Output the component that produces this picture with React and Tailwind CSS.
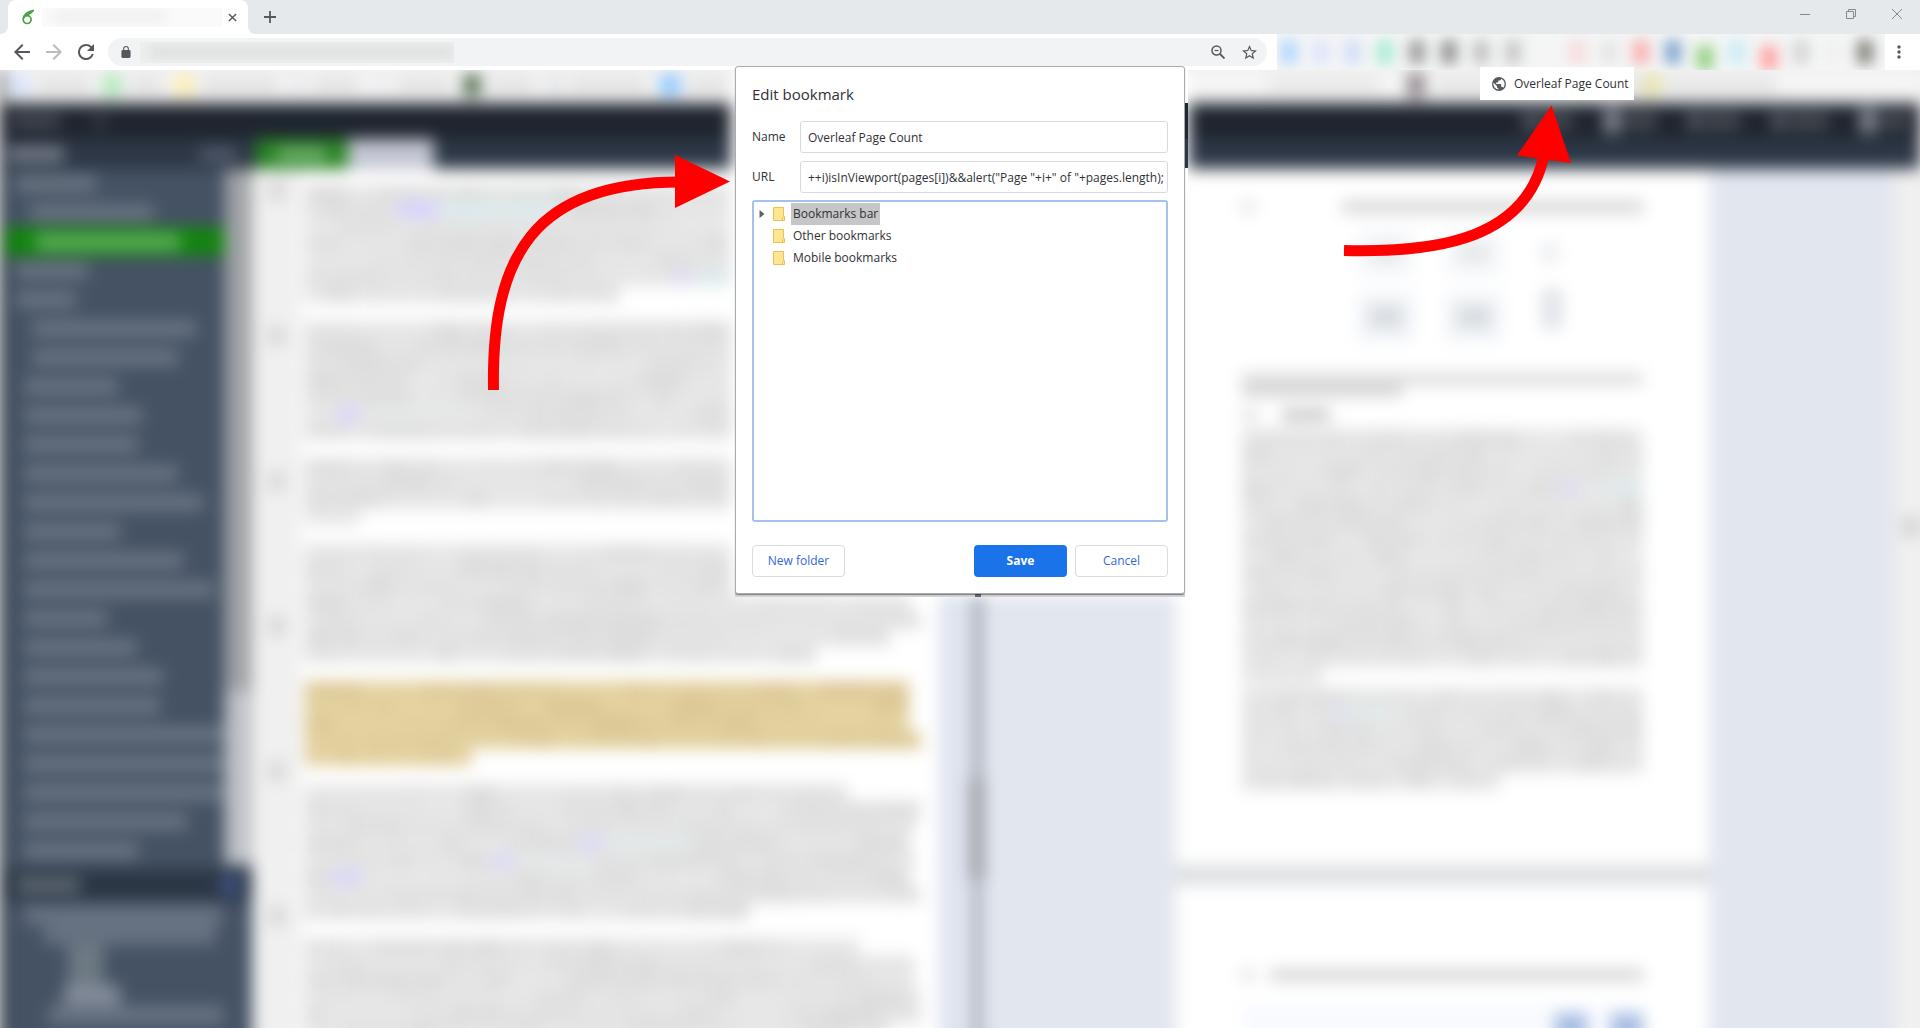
import React from "react";

const seeded = (seed) => {
  let s = seed * 7919 + 17;
  return () => {
    s = (s * 1103515245 + 12345) % 2147483648;
    return s / 2147483648;
  };
};

/* One line of redacted words; width in percent of the column. */
function Line({ width = 100, seed, link, tone = "gray" }) {
  const rnd = seeded(seed);
  const words = Array.from({ length: 16 }, () => ({ grow: 2 + Math.floor(rnd() * 9), o: rnd() }));
  const base = tone === "gold" ? "bg-[#e6d4a2]" : "bg-[#e8e8e8]";
  const word = tone === "gold" ? "bg-[#dbc796]" : "bg-[#dcdcdc]";
  return (
    <div className={`flex h-[17px] items-center gap-1 ${base}`} style={{ width: `${width}%` }}>
      {words.map((w, i) => (
        <span
          key={i}
          className={`h-[17px] ${link === i ? "bg-[#d5d2ff]" : link !== undefined && (i === link + 1 || i === link + 2) ? "bg-[#dcebed]" : word}`}
          style={{ flexGrow: w.grow, opacity: w.o }}
        />
      ))}
    </div>
  );
}

function Paragraph({ lines, tone, seed }) {
  return (
    <div>
      {lines.map((l, i) => {
        const [width, link] = Array.isArray(l) ? l : [l];
        return <Line key={i} width={width} link={link} tone={tone} seed={seed * 31 + i} />;
      })}
    </div>
  );
}

const FILES = [
  [16, 80], [30, 124], [0, 0], [16, 72], [16, 60], [32, 164], [32, 146], [24, 94], [24, 118], [24, 114], [24, 154],
  [24, 179], [24, 96], [24, 159], [24, 190], [24, 83], [24, 113], [24, 139], [24, 136], [24, 200], [24, 200],
  [24, 200], [24, 163], [24, 114],
];

function FileTree() {
  return (
    <aside className="flex flex-col bg-[#455264]">
      <div className="flex h-[30px] items-center justify-between bg-[#2d3746] pr-4 pl-2">
        <span className="h-4 w-14 bg-[#747b88]" />
        <span className="h-3 w-9 bg-[#566071]" />
      </div>
      <div className="flex">
        <div className="flex-1 overflow-hidden">
          {FILES.map(([left, width], i) =>
            width === 0 ? (
              <div key={i} className="flex h-[29px] items-center bg-[#12850f] pl-9">
                <span className="h-4 w-36 bg-[#5db058]" />
              </div>
            ) : (
              <div key={i} className="flex h-[29px] items-center" style={{ paddingLeft: left }}>
                <span className="h-[17px] bg-[#687381]" style={{ width }} />
              </div>
            )
          )}
        </div>
        <div className="flex w-[27px] flex-col bg-[#bfc3c8]">
          <span className="h-[522px] bg-[#a0a3a7]" />
        </div>
      </div>
      <div className="mt-1 flex h-8 items-center justify-between bg-[#2b3645] pr-3 pl-4">
        <span className="h-4 w-16 bg-[#5d6770]" />
        <span className="h-4 w-5 bg-[#3f5688]" />
      </div>
      <div className="flex flex-1 flex-col pt-1">
        <span className="ml-6 h-5 w-[198px] bg-[#667181]" />
        <span className="ml-11 h-5 w-[172px] bg-[#667181]" />
        <span className="ml-[68px] h-10 w-9 bg-[#6d7983]" />
        <span className="ml-16 h-5 w-14 bg-[#848b9a]" />
        <span className="ml-12 h-5 w-44 bg-[#667181]" />
      </div>
    </aside>
  );
}

const SOURCE = [
  { lines: [100, [100, 3], 100, 100, 100, [100, 9], 51] },
  { lines: [97, 100, 100, 100, 98, [100, 1], 96] },
  { lines: [100, 97, 100, 9] },
  { lines: [98, 100, 100, 98, 100, 95, 83] },
  { lines: [98, 98, 98, 100, 27], tone: "gold" },
  { lines: [88, 100, 99, [98, 8], [99, 5], [98, 1], 100, 72] },
  { lines: [90, 99, 99, 100, 100, 95] },
];

function Editor() {
  return (
    <section className="flex flex-col bg-white">
      <div className="flex h-[30px] bg-[#2d3746]">
        <span className="ml-1 flex w-[92px] items-center justify-center bg-[#2a8526]">
          <span className="h-3 w-12 bg-[#78b575]" />
        </span>
        <span className="w-[86px] bg-[#c3c6d2]" />
      </div>
      <div className="flex flex-1">
        <div className="flex w-[49px] shrink-0 flex-col items-center gap-[125px] bg-[#f0f0f0] pt-3">
          {[0, 1, 2, 3, 4, 5].map((i) => (
            <span key={i} className="h-5 w-4 bg-[#d6d6d6]" />
          ))}
        </div>
        <div className="flex flex-1 flex-col gap-[18px] pt-[15px] pr-[18px] pl-1">
          {SOURCE.map((p, i) => (
            <Paragraph key={i} lines={p.lines} tone={p.tone} seed={i + 1} />
          ))}
        </div>
        <div className="w-[30px] shrink-0 bg-[#dfe4ef]" />
        <div className="flex w-4 shrink-0 flex-col items-center bg-[#dddfe6]">
          <span className="h-[610px] w-[7px] bg-[#8c94a1]" />
          <span className="h-[100px] w-4 bg-[#a2a4a8]" />
          <span className="w-[7px] flex-1 bg-[#989eaa]" />
        </div>
      </div>
    </section>
  );
}

function FigureRow({ faint }) {
  return (
    <div className={`flex items-center pl-[116px] ${faint ? "opacity-60" : ""}`}>
      <span className="flex h-12 w-14 items-center justify-center bg-[#f1f4f8]">
        <span className="h-5 w-8 bg-[#d6d9dd]" />
      </span>
      <span className="ml-8 flex h-12 w-14 items-center justify-center bg-[#f1f4f8]">
        <span className="h-5 w-8 bg-[#d6d9dd]" />
      </span>
      <span className={faint ? "ml-10 h-5 w-4 bg-[#dfe2e8]" : "mb-4 ml-10 h-10 w-5 bg-[#dfe2e8]"} />
    </div>
  );
}

const BODY = [100, 100, 100, [100, 13], 100, 100, 100, 100, 100, 100, 100, 100, 100, 100, 20];

function Preview() {
  return (
    <section className="flex flex-1 bg-[#e2e6ef]">
      <div className="flex flex-1 flex-col pr-[186px] pl-[191px]">
        <div className="h-[696px] shrink-0 bg-white px-[66px] pt-8">
          <div className="flex h-3 gap-16">
            <span className="w-3 bg-[#dedede]" />
            <span className="ml-6 flex-1 bg-[#d4d4d4]" />
          </div>
          <div className="mt-4 flex flex-col gap-3">
            <FigureRow faint />
            <FigureRow />
          </div>
          <div className="mt-7 flex flex-col">
            <span className="h-3 bg-[#dcdcdc]" />
            <span className="h-3 w-40 bg-[#d6d6d6]" />
          </div>
          <div className="mt-3 flex gap-6">
            <span className="h-3 w-4 bg-[#e0e0e0]" />
            <span className="h-3 w-12 bg-[#c6c6c6]" />
          </div>
          <div className="mt-2">
            <Paragraph lines={BODY} seed={20} />
            <div className="mt-1">
              <Paragraph lines={[100, [100, 4], 100, 100, 100, 64]} seed={40} />
            </div>
          </div>
        </div>
        <div className="h-5 shrink-0 bg-[#dcdfe1]" />
        <div className="flex flex-1 flex-col bg-white px-[66px] pt-[84px]">
          <div className="flex h-3 gap-4">
            <span className="w-3 bg-[#dedede]" />
            <span className="flex-1 bg-[#d4d4d4]" />
          </div>
          <div className="mt-6 flex flex-1 items-start justify-end gap-6 bg-[#f8faff] pt-2">
            <span className="h-8 w-8 bg-[#a9bde2]" />
            <span className="h-8 w-8 bg-[#a9bde2]" />
          </div>
        </div>
      </div>
      <div className="flex w-[25px] items-center bg-[#f0f0f0]">
        <span className="mb-40 ml-2 h-5 flex-1 bg-[#d0d0d0]" />
      </div>
    </section>
  );
}

const SHORTCUTS = [
  ["w-4 bg-[#cfe0ff]", "w-14"], ["w-4 bg-[#9ee7aa]", "w-9"], ["w-4 bg-[#ffec9e]", "w-20"], ["w-3 bg-[#e4e5e8]", "w-12"],
  ["w-4 bg-[#ececef]", "w-14"], ["w-4 bg-[#3b5c38]", "w-12"], ["w-3 bg-[#dcdee1]", "w-20"], ["w-5 bg-[#86c4ff]", "w-12"],
  ["w-4 bg-[#8dcff2]", "w-20"],
];

function BookmarksBar() {
  return (
    <div className="flex h-[33px] items-center bg-[#f5f5f5] pb-1 pl-3">
      {SHORTCUTS.map(([icon, label], i) => (
        <span key={i} className="flex items-center">
          <span className={`h-5 ${icon}`} />
          <span className={`mr-3 ml-2 h-4 bg-[#e2e2e2] ${label}`} />
        </span>
      ))}
      <span className="flex-1" />
      <span className="h-4 w-28 bg-[#e8e8e8]" />
      <span className="ml-7 h-6 w-4 bg-[#857a7f]" />
      <span className="ml-3 h-4 w-52 bg-[#e4e4e4]" />
      <span className="mr-1 h-5 w-4 bg-[#e8e09a]" />
      <span className="mr-36 h-4 w-28 bg-[#e4e4e4]" />
    </div>
  );
}

function Workspace() {
  return (
    <div className="flex min-h-0 flex-1 flex-col overflow-hidden bg-[#f0f0f0]">
      <div className="relative flex flex-1 flex-col blur-[8px]">
        <BookmarksBar />
        <div className="flex h-[36px] shrink-0 items-center justify-between bg-[#1f252f] pr-3 pl-3">
          <div className="flex gap-9">
            <span className="h-3 w-12 bg-[#4b4f57]" />
            <span className="h-3 w-2 bg-[#4b4f57]" />
          </div>
          <div className="flex gap-8">
            {["w-8", "w-8", "w-9", "w-10", "w-7"].map((w, i) => (
              <span key={i} className="flex items-center gap-1">
                <span className={i === 1 || i === 4 ? "h-6 w-4 bg-[#8c8f99]" : "h-4 w-3 bg-[#62656e]"} />
                <span className={`h-4 bg-[#484c53] ${w}`} />
              </span>
            ))}
          </div>
        </div>
        <div className="grid flex-1 grid-cols-[252px_733fr_935fr]">
          <FileTree />
          <Editor />
          <div className="flex flex-col bg-[#e2e6ef]">
            <div className="h-[30px] shrink-0 bg-[#2d3746]" />
            <Preview />
          </div>
        </div>
        <div className="absolute inset-y-0 left-0 w-1 bg-[#14191f]" />
        <div className="absolute top-0 left-1/2 h-[526px] w-[458px] -translate-x-1/2 bg-white" />
      </div>
    </div>
  );
}

function OverleafMark() {
  return (
    <svg viewBox="0 0 14 18" className="h-4 w-3" fill="none" stroke="#47a141" strokeWidth="2">
      <circle cx="6" cy="12" r="4.6" />
      <path d="M1.6 11C2 6 6 3 13 1.5C11 5 8 5.5 4.5 7.5" />
    </svg>
  );
}

function WindowTop() {
  return (
    <div className="flex h-[34px] bg-[#e5e9ec] pl-2">
      <div className="relative flex w-60 items-center rounded-t-lg bg-white pr-2 pl-[14px] before:absolute before:bottom-0 before:-left-2 before:h-2 before:w-2 before:bg-[radial-gradient(circle_at_0_0,#e5e9ec_8px,white_8px)] after:absolute after:-right-2 after:bottom-0 after:h-2 after:w-2 after:bg-[radial-gradient(circle_at_100%_0,#e5e9ec_8px,white_8px)]">
        <OverleafMark />
        <div className="ml-2 flex h-[19px] flex-1 items-center overflow-hidden bg-[#fafafa]">
          <span className="ml-3 h-3 w-28 bg-[#efefef] blur-[6px]" />
        </div>
        <button aria-label="Close tab" className="ml-[2px] flex h-4 w-4 items-center justify-center">
          <svg viewBox="0 0 10 10" className="h-[9px] w-[9px]" stroke="#55595e" strokeWidth="1.6">
            <path d="M1 1L9 9M9 1L1 9" />
          </svg>
        </button>
      </div>
      <button aria-label="New tab" className="ml-[14px] flex w-4 items-center justify-center">
        <svg viewBox="0 0 12 12" className="h-3 w-3" stroke="#55595e" strokeWidth="1.8">
          <path d="M6 0V12M0 6H12" />
        </svg>
      </button>
      <div className="ml-auto flex h-[28px] items-center">
        <button aria-label="Minimize" className="flex w-[46px] justify-center">
          <svg viewBox="0 0 10 10" className="h-[10px] w-[10px]" stroke="#85898d">
            <path d="M0 5.5H10" />
          </svg>
        </button>
        <button aria-label="Restore" className="flex w-[46px] justify-center">
          <svg viewBox="0 0 10 10" className="h-[10px] w-[10px]" stroke="#85898d" fill="none">
            <path d="M0.5 2.5H7.5V9.5H0.5ZM2.5 2.5V0.5H9.5V7.5H7.5" />
          </svg>
        </button>
        <button aria-label="Close window" className="flex w-[46px] justify-center">
          <svg viewBox="0 0 10 10" className="h-[10px] w-[10px]" stroke="#85898d">
            <path d="M0 0L10 10M10 0L0 10" />
          </svg>
        </button>
      </div>
    </div>
  );
}

const EXTENSIONS = [
  "bg-[#b0d6ff]", "bg-[#dbe3fb]", "bg-[#cfdcf8]", "bg-[#a6ecd4]", "bg-[#9c9c9c]", "bg-[#939393]", "bg-[#c0c0c0]",
  "bg-[#c6c6c6]", "bg-[#f4f4f4]", "bg-[#f7dada]", "bg-[#e4e4e4]", "bg-[#fbadad]", "bg-[#7fa5cc]", "bg-[#8ecf7e]",
  "bg-[#c8ebf5]", "bg-[#ffa0a0]", "bg-[#d4d4d4]", "bg-[#f0f0f0]", "bg-[#84847d]",
];

function Toolbar() {
  const icon = "h-4 w-4";
  return (
    <div className="flex h-9 items-center bg-white pl-[14px]">
      <div className="flex gap-4">
        <button aria-label="Back">
          <svg viewBox="4 4 16 16" className={icon} fill="#55595e">
            <path d="M20 11H7.83l5.59-5.59L12 4l-8 8 8 8 1.41-1.41L7.83 13H20z" />
          </svg>
        </button>
        <button aria-label="Forward">
          <svg viewBox="4 4 16 16" className={icon} fill="#babcbe">
            <path d="M12 4l-1.41 1.41L16.17 11H4v2h12.17l-5.58 5.59L12 20l8-8z" />
          </svg>
        </button>
        <button aria-label="Reload">
          <svg viewBox="4 4 16 16" className={icon} fill="#55595e">
            <path d="M17.65 6.35A7.96 7.96 0 0 0 12 4a8 8 0 1 0 7.73 10h-2.08A6 6 0 1 1 12 6c1.66 0 3.14.69 4.22 1.78L13 11h7V4z" />
          </svg>
        </button>
      </div>
      <div className="ml-[14px] flex h-7 flex-1 items-center rounded-full bg-[#f1f3f4] pr-[10px] pl-[13px]">
        <svg viewBox="4 1 16 21" className="h-3 w-[10px]" fill="#55595e">
          <path d="M18 8h-1V6A5 5 0 0 0 7 6v2H6a2 2 0 0 0-2 2v10c0 1.1.9 2 2 2h12a2 2 0 0 0 2-2V10a2 2 0 0 0-2-2zM8.9 6a3.1 3.1 0 0 1 6.2 0v2H8.9z" />
        </svg>
        <span className="ml-[9px] flex h-[21px] w-[314px] items-center overflow-hidden bg-[#eff0f0]">
          <span className="ml-2 h-3 flex-1 bg-[#dcdede] blur-[6px]" />
        </span>
        <button aria-label="Zoom" className="ml-auto">
          <svg viewBox="0 0 14 14" className="h-[14px] w-[14px]" fill="none" stroke="#55595e" strokeWidth="1.5">
            <circle cx="5.5" cy="5.5" r="4.5" />
            <path d="M9 9L13.5 13.5" strokeWidth="1.8" />
            <path d="M3.5 5.5H7.5" strokeWidth="1.2" />
          </svg>
        </button>
        <button aria-label="Bookmark this page" className="ml-[17px]">
          <svg viewBox="2 2 20 20" className="h-[15px] w-[15px]" fill="#55595e">
            <path d="M22 9.24l-7.19-.62L12 2 9.19 8.63 2 9.24l5.46 4.73L5.82 21 12 17.27 18.18 21l-1.63-7.03L22 9.24zM12 15.4l-3.76 2.27 1-4.28-3.32-2.88 4.38-.38L12 6.1l1.71 4.04 4.38.38-3.32 2.88 1 4.28L12 15.4z" />
          </svg>
        </button>
      </div>
      <div className="ml-[10px] h-full w-[608px] overflow-hidden bg-[#f5f6f6]">
        <div className="flex h-full items-center gap-4 px-1 blur-[7px]">
          {EXTENSIONS.map((c, i) => (
            <span key={i} className={`h-6 w-4 ${i === 13 || i === 15 ? "mt-3" : ""} ${c}`} />
          ))}
        </div>
      </div>
      <button aria-label="Menu" className="flex w-[35px] justify-center pr-2">
        <svg viewBox="0 0 4 14" className="h-[14px] w-1" fill="#55595e">
          <circle cx="2" cy="2" r="1.7" />
          <circle cx="2" cy="7" r="1.7" />
          <circle cx="2" cy="12" r="1.7" />
        </svg>
      </button>
    </div>
  );
}

function Folder() {
  return (
    <svg viewBox="0 0 12 14" className="h-[14px] w-3" fill="#ffe594" stroke="#e8c14e">
      <path d="M0.5 0.5H10.5V9.5H11.5V13.5H0.5Z" />
      <path d="M9.5 13.5V10.5L10.5 9.5" />
    </svg>
  );
}

function EditBookmark() {
  const field =
    "h-8 w-full min-w-0 rounded-[3px] border border-[#d9dade] bg-white pr-0 pl-[7px] text-[12px] text-[#303136] outline-none";
  const outline = "h-8 w-[93px] rounded border border-[#dadce0] bg-white text-[12px] text-[#3367d6]";
  return (
    <div className="absolute top-[66px] left-1/2 -translate-x-1/2">
      <div className="absolute top-1 bottom-0 left-full flex w-[3px] flex-col bg-white">
        <span className="mt-[33px] h-9 bg-[#212730]" />
        <span className="h-[29px] bg-[#2d3746]" />
      </div>
      <div className="absolute top-full left-0 flex h-[3px] w-full bg-[#d3d4d6]">
        <span className="ml-[240px] h-full w-[6px] bg-[#606b7d]" />
      </div>
      <form
        role="dialog"
        aria-label="Edit bookmark"
        onSubmit={(e) => e.preventDefault()}
        className="relative w-[450px] rounded-[3px] border border-[#a9abae] bg-white px-4 pt-[17px] pb-4 shadow-[0_1px_1px_rgba(0,0,0,0.4)]"
      >
        <h1 className="text-[15px] leading-5 text-[#303136]">Edit bookmark</h1>
        <div className="mt-[17px] grid grid-cols-[48px_1fr] items-center gap-y-2">
          <label htmlFor="bm-name" className="text-[12px] text-[#303136]">Name</label>
          <input id="bm-name" className={field} defaultValue="Overleaf Page Count" />
          <label htmlFor="bm-url" className="text-[12px] text-[#303136]">URL</label>
          <input id="bm-url" className={field} defaultValue={'++i)isInViewport(pages[i])&&alert("Page "+i+" of "+pages.length);'} />
        </div>
        <ul className="mt-[7px] h-[322px] rounded-[3px] border-2 border-[#a3c3ea] pt-px pl-[5px] text-[12px] text-[#303136]">
          {["Bookmarks bar", "Other bookmarks", "Mobile bookmarks"].map((name, i) => (
            <li key={name} className="flex h-[22px] items-center">
              <svg viewBox="0 0 6 8" className={`h-2 w-[6px] ${i ? "invisible" : ""}`} fill="#5f6368">
                <path d="M0.5 0L5.5 4L0.5 8Z" />
              </svg>
              <span className="ml-2">
                <Folder />
              </span>
              <button type="button" className={`ml-[6px] h-[22px] px-[2px] ${i ? "" : "bg-[#c6c6c8]"}`}>{name}</button>
            </li>
          ))}
        </ul>
        <div className="mt-[23px] flex gap-2">
          <button type="button" className={outline}>New folder</button>
          <button type="submit" className="ml-auto h-8 w-[93px] rounded bg-[#1a73e8] text-[12px] font-bold text-white">Save</button>
          <button type="button" className={outline}>Cancel</button>
        </div>
      </form>
    </div>
  );
}

function Annotations() {
  return (
    <svg viewBox="0 0 1920 400" className="pointer-events-none absolute top-0 left-0 w-full" fill="none">
      <path d="M493.5 390C491 255 535 182 680 182" stroke="#ff0000" strokeWidth="11" />
      <path d="M675 155L730 181.5L675 208Z" fill="#ff0000" />
      <path d="M1344 250.5C1440 253 1527 238 1544 155" stroke="#ff0000" strokeWidth="11" />
      <path d="M1551.5 105.5L1517 155.5L1571 163Z" fill="#ff0000" />
    </svg>
  );
}

export default function App() {
  return (
    <main className="relative flex h-screen flex-col overflow-hidden bg-white font-['Open_Sans','Noto_Sans',sans-serif]">
      <WindowTop />
      <Toolbar />
      <Workspace />
      <a
        href="#page-count"
        className="absolute top-[67px] right-[286px] flex h-[33px] w-[154px] items-center bg-white pl-3 text-[12px] whitespace-nowrap text-[#303136]"
      >
        <svg viewBox="2 2 20 20" className="mr-2 h-[14px] w-[14px] shrink-0" fill="#55595e">
          <path d="M12 2a10 10 0 1 0 0 20 10 10 0 0 0 0-20zm-1 17.93A8 8 0 0 1 4.21 10.21L9 15v1a2 2 0 0 0 2 2v1.93zm6.9-2.54A2 2 0 0 0 16 16h-1v-3a1 1 0 0 0-1-1H8v-2h2a1 1 0 0 0 1-1V7h2a2 2 0 0 0 2-2v-.41a8 8 0 0 1 2.9 12.8z" />
        </svg>
        Overleaf Page Count
      </a>
      <Annotations />
      <EditBookmark />
    </main>
  );
}
